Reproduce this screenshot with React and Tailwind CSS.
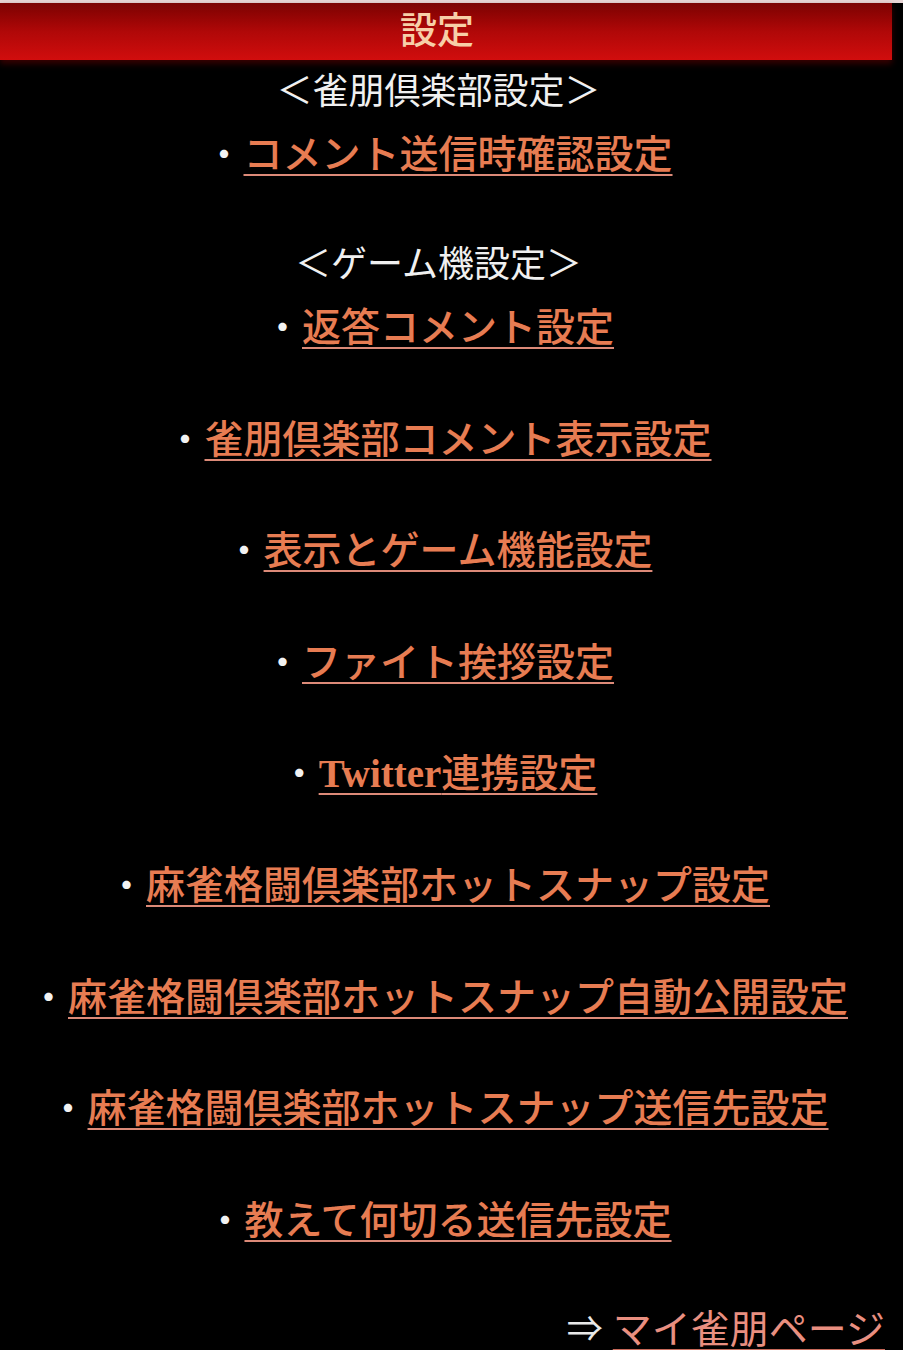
const jp = { fontFamily: '"Liberation Serif", "Noto Sans CJK JP", serif' };

const items = [
  "返答コメント設定",
  "雀朋倶楽部コメント表示設定",
  "表示とゲーム機能設定",
  "ファイト挨拶設定",
  "Twitter連携設定",
  "麻雀格闘倶楽部ホットスナップ設定",
  "麻雀格闘倶楽部ホットスナップ自動公開設定",
  "麻雀格闘倶楽部ホットスナップ送信先設定",
  "教えて何切る送信先設定",
];

function Item({ label, className = "" }) {
  const latin = label.startsWith("Twitter");
  return (
    <div className={"w-[877px] text-center text-[39px] leading-[40px] whitespace-nowrap " + className}>
      <span className="text-[#f2f2f2]">・</span>
      <a
        href="#"
        className="text-[#e77c52] font-medium underline decoration-[#dc8a78] decoration-2 underline-offset-[6px]"
      >
        {latin ? (
          <>
            <span className="font-bold">Twitter</span>
            {label.slice(7)}
          </>
        ) : (
          label
        )}
      </a>
    </div>
  );
}

export default function App() {
  return (
    <div className="w-[914px] h-[1350px] bg-white flex" style={jp}>
      <div className="w-[903px] h-full bg-black overflow-hidden flex flex-col">
        <div className="h-[3px] bg-[#e9d6d6]" />

        {/* header bar */}
        <div className="w-[892px] h-[57px] bg-gradient-to-b from-[#7c0202] via-[#b00808] to-[#d10d0d] shadow-[0_4px_6px_rgba(60,0,0,0.9)] flex items-center justify-center">
          <span className="text-[37px] leading-none font-medium text-[#f7cfa8] pr-[18px]">設定</span>
        </div>

        <div className="w-[877px] mt-[12px] text-center text-[#f0f0f0] text-[36px] leading-[40px]">
          ＜雀朋倶楽部設定＞
        </div>
        <Item label="コメント送信時確認設定" className="mt-[23px]" />

        <div className="w-[877px] mt-[70px] text-center text-[#f0f0f0] text-[36px] leading-[40px]">
          ＜ゲーム機設定＞
        </div>
        <Item label={items[0]} className="mt-[23px]" />
        {items.slice(1).map((label) => (
          <Item key={label} label={label} className="mt-[71.6px]" />
        ))}

        {/* my page link */}
        <div className="mt-[69px] pr-[18px] flex justify-end items-center text-[39px] leading-[40px] whitespace-nowrap">
          <span className="text-[#e8e8e8] text-[36px] mr-[10px]">⇒</span>
          <a href="#" className="text-[#e98f80] underline decoration-[#c86a5a] decoration-2 underline-offset-[6px]">
            マイ雀朋ページ
          </a>
        </div>
      </div>
    </div>
  );
}
